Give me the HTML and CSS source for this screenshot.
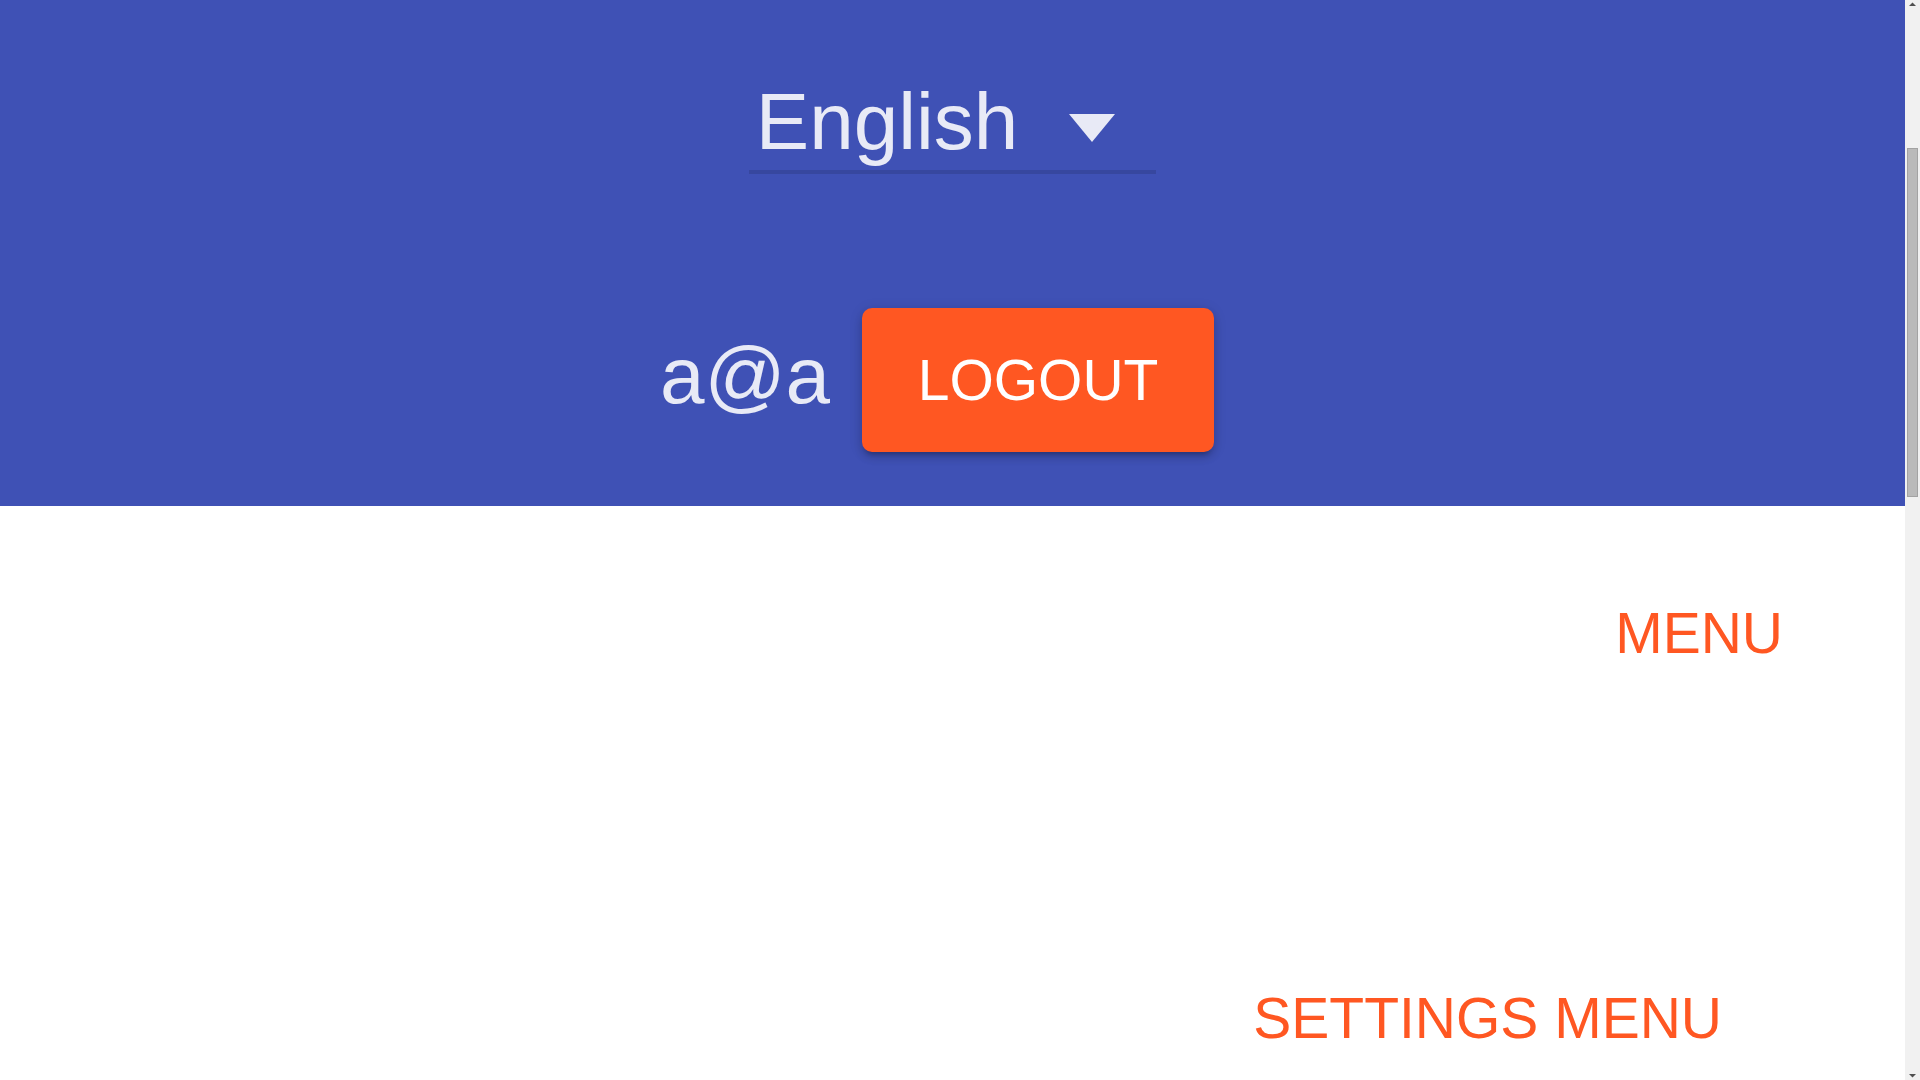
FILE: index.html
```html
<!DOCTYPE html>
<html lang="en">
<head>
<meta charset="utf-8">
<title>Settings</title>
<link rel="stylesheet" href="styles.css">
</head>
<body>
<div class="page">
  <header class="header">
    <div class="select">
      <span class="select-value">English</span>
      <svg class="arrow" width="46" height="28" viewBox="0 0 46 28"><path d="M0 0H46L23 28Z" fill="#e8eaf6"/></svg>
    </div>
    <div class="user-row">
      <span class="user">a@a</span>
      <button class="logout">LOGOUT</button>
    </div>
  </header>
  <main class="content">
    <div class="menu-row"><span class="menu">MENU</span></div>
    <div class="settings-row"><span class="menu">SETTINGS MENU</span></div>
  </main>
</div>
<div class="scrollbar">
  <svg class="sb-up" width="15" height="10" viewBox="0 0 15 10"><path d="M4 6H11L7.5 2.5Z" fill="#505050"/></svg>
  <div class="sb-thumb"></div>
  <svg class="sb-down" width="15" height="10" viewBox="0 0 15 10"><path d="M4 4H11L7.5 7.5Z" fill="#505050"/></svg>
</div>
</body>
</html>
```

FILE: styles.css
```css
html, body {
  margin: 0;
  padding: 0;
}
body {
  font-family: "Liberation Sans", Arial, sans-serif;
  background: #ffffff;
  overflow: hidden;
}
.page {
  margin-right: 15px;
}
.header {
  background: #3f51b5;
  height: 506px;
  box-sizing: border-box;
  padding-top: 82px;
  display: flex;
  flex-direction: column;
  align-items: center;
}
.select {
  display: flex;
  align-items: flex-start;
  gap: 51px;
  padding: 0 41px 8px 7px;
  border-bottom: 4px solid rgba(0, 0, 0, 0.12);
}
.select-value {
  font-size: 80px;
  line-height: 80px;
  color: #e8eaf6;
}
.arrow {
  display: block;
  margin-top: 32px;
}
.user-row {
  display: flex;
  align-items: flex-start;
  gap: 32px;
  margin-top: 134px;
  padding-right: 31px;
}
.user {
  font-size: 80px;
  line-height: 80px;
  color: #e8eaf6;
  margin-top: 28px;
}
.logout {
  width: 352px;
  height: 144px;
  border: 0;
  padding: 0;
  border-radius: 10px;
  background: #ff5722;
  color: #ffffff;
  font-family: inherit;
  font-size: 57px;
  box-shadow: 0 6px 4px -4px rgba(0, 0, 0, 0.2), 0 5px 8px 0 rgba(0, 0, 0, 0.14), 0 2px 14px 0 rgba(0, 0, 0, 0.12);
}
.content {
  height: 574px;
  padding-top: 99px;
  box-sizing: border-box;
}
.menu-row {
  display: flex;
  justify-content: flex-end;
  padding-right: 122px;
}
.settings-row {
  display: flex;
  justify-content: flex-end;
  padding-right: 183px;
  margin-top: 328px;
}
.menu {
  font-size: 57px;
  line-height: 57px;
  color: #ff5722;
  white-space: nowrap;
}
.scrollbar {
  position: fixed;
  top: 0;
  right: 0;
  width: 15px;
  height: 100%;
  background: #f1f1f1;
}
.sb-up {
  position: absolute;
  top: 0;
  left: 0;
  display: block;
}
.sb-down {
  position: absolute;
  bottom: 0;
  left: 0;
  display: block;
}
.sb-thumb {
  position: absolute;
  top: 148px;
  left: 2px;
  width: 9px;
  height: 347px;
  background: #bababa;
  border: 1px solid #a3a3a3;
}
```
